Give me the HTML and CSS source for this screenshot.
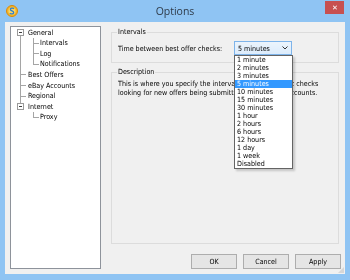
FILE: index.html
```html
<!DOCTYPE html>
<html lang="en">

<head>
    <meta charset="UTF-8">
    <title>Options</title>
    <link rel="stylesheet" href="styles.css">
</head>

<body>

    <div class="window">
        <div class="titlebar">
            <div class="app-icon">
                <svg width="12" height="12" viewBox="0 0 12 12">
                    <circle cx="6" cy="6" r="5.5" fill="#f3b52a" stroke="#d98a0c" stroke-width="1" />
                    <circle cx="6" cy="6" r="3.6" fill="#fbd765" />
                    <path d="M8 3.6 C6.6 2.6 4.2 3 4.4 4.6 C4.6 6 7.8 5.8 7.7 7.6 C7.6 9.2 5 9.3 3.8 8.3"
                        fill="none" stroke="#2f7fd0" stroke-width="1.3" />
                </svg>
            </div>
            <div class="title">Options</div>
            <div class="close">&#x2715;</div>
        </div>

        <div class="content">
            <div class="tree">
                <div class="node r0 first"><span class="toggle"></span><span class="label">General</span></div>
                <div class="node r1"><span class="label">Intervals</span></div>
                <div class="node r1"><span class="label">Log</span></div>
                <div class="node r1 last"><span class="label">Notifications</span></div>
                <div class="node r0 plain"><span class="label">Best Offers</span></div>
                <div class="node r0 plain"><span class="label">eBay Accounts</span></div>
                <div class="node r0 plain"><span class="label">Regional</span></div>
                <div class="node r0 end"><span class="toggle"></span><span class="label">Internet</span></div>
                <div class="node r1 solo"><span class="label">Proxy</span></div>
            </div>

            <div class="panel">
                <div class="group intervals">
                    <span class="group-title">Intervals</span>
                    <div class="field">
                        <span class="field-label">Time between best offer checks:</span>
                        <div class="select">
                            <span>5 minutes</span>
                            <svg class="chevron" width="6" height="4" viewBox="0 0 6 4">
                                <polyline points="0.5,0.5 3,3 5.5,0.5" fill="none" stroke="#333" stroke-width="1" />
                            </svg>
                            <ul class="options">
                                <li>1 minute</li>
                                <li>2 minutes</li>
                                <li>3 minutes</li>
                                <li class="selected">5 minutes</li>
                                <li>10 minutes</li>
                                <li>15 minutes</li>
                                <li>30 minutes</li>
                                <li>1 hour</li>
                                <li>2 hours</li>
                                <li>6 hours</li>
                                <li>12 hours</li>
                                <li>1 day</li>
                                <li>1 week</li>
                                <li>Disabled</li>
                            </ul>
                        </div>
                    </div>
                </div>

                <div class="group description">
                    <span class="group-title">Description</span>
                    <p class="desc-text">This is where you specify the interval between periodic checks looking for new offers being submitted to your eBay accounts.</p>
                </div>

                <div class="btn-list">
                    <button>OK</button>
                    <button>Cancel</button>
                    <button>Apply</button>
                </div>
            </div>
            <div class="grip"></div>
        </div>
    </div>

</body>

</html>
```

FILE: styles.css
```css
* {
    margin: 0;
    padding: 0;
    box-sizing: border-box;
}

body {
    width: 350px;
    height: 280px;
    overflow: hidden;
    background-color: #8fc4f3;
    font-family: 'DejaVu Sans Condensed', 'Liberation Sans', Arial, sans-serif;
    font-size: 7.1px;
    color: #000;
}

.window {
    height: 280px;
    display: flex;
    flex-direction: column;
    will-change: transform;
}

.titlebar {
    height: 22px;
    display: grid;
    grid-template-columns: 1fr auto 1fr;
    align-items: start;
}

.app-icon {
    margin: 5px 0 0 6px;
    height: 12px;
}

.title {
    margin-top: 4px;
    font-family: 'Open Sans', 'Liberation Sans', sans-serif;
    font-size: 10.5px;
    line-height: 14px;
    color: #2e3a48;
}

.close {
    justify-self: end;
    margin: 1px 6px 0 0;
    width: 19px;
    height: 13px;
    background-color: #c75050;
    color: #fff;
    font-family: 'Liberation Sans', sans-serif;
    font-size: 7px;
    line-height: 13px;
    text-align: center;
}

.content {
    position: relative;
    height: 252px;
    margin: 0 5px;
    background-color: #f0f0f0;
    display: flex;
}

/* tree */

.tree {
    margin: 4px 0 0 5px;
    width: 91px;
    height: 243px;
    background-color: #fff;
    border: 1px solid #8e939b;
}

.node {
    height: 11px;
    line-height: 11px;
    padding-left: 17px;
    white-space: nowrap;
    background-repeat: no-repeat;
}

.node .label {
    color: #000;
}

.node:nth-child(2),
.node:nth-child(4),
.node:nth-child(7),
.node:nth-child(9) {
    height: 10px;
    line-height: 10px;
}

.toggle {
    display: inline-block;
    vertical-align: top;
    width: 7px;
    height: 7px;
    margin: 2px 4px 0 -11px;
    border: 1px solid #9a9a9a;
    background-color: #fff;
    position: relative;
}

.toggle::after {
    content: "";
    position: absolute;
    left: 1px;
    top: 2px;
    width: 3px;
    height: 1px;
    background-color: #404040;
}

.r0.plain {
    background-image: linear-gradient(#a5a5a5, #a5a5a5), linear-gradient(#a5a5a5, #a5a5a5);
    background-position: 9px 0, 9px 5px;
    background-size: 1px 100%, 6px 1px;
}

.r0.first {
    background-image: linear-gradient(#a5a5a5, #a5a5a5);
    background-position: 9px 8px;
    background-size: 1px 100%;
}

.r0.end {
    background-image: linear-gradient(#a5a5a5, #a5a5a5);
    background-position: 9px 0;
    background-size: 1px 3px;
}

.r1 {
    padding-left: 29px;
    background-image: linear-gradient(#a5a5a5, #a5a5a5), linear-gradient(#a5a5a5, #a5a5a5), linear-gradient(#a5a5a5, #a5a5a5);
    background-position: 9px 0, 22px 0, 22px 5px;
    background-size: 1px 100%, 1px 100%, 6px 1px;
}

.r1.last {
    background-size: 1px 100%, 1px 6px, 6px 1px;
}

.r1.solo {
    background-image: linear-gradient(#a5a5a5, #a5a5a5), linear-gradient(#a5a5a5, #a5a5a5);
    background-position: 22px 0, 22px 5px;
    background-size: 1px 6px, 6px 1px;
}

/* right side */

.panel {
    margin: 10px 4px 0 10px;
    width: 230px;
    display: flex;
    flex-direction: column;
}

.group {
    margin-right: 2px;
    border: 1px solid #dcdcdc;
    padding: 0 6px;
}

.group-title {
    display: block;
    width: fit-content;
    margin: -6px 0 0 -1px;
    padding: 0 1px;
    line-height: 10px;
    background-color: #f0f0f0;
}

.intervals {
    height: 31px;
}

.field {
    margin-top: 4px;
    display: flex;
    align-items: center;
}

.field-label {
    flex: 1;
}

.select {
    position: relative;
    width: 58px;
    height: 14px;
    margin-right: 40px;
    padding-left: 3px;
    display: flex;
    align-items: center;
    justify-content: space-between;
    border: 1px solid #7eb4ea;
    background: linear-gradient(#ecf4fc, #dcecfc);
}

.chevron {
    margin-right: 3px;
}

.options {
    position: absolute;
    top: 13px;
    left: -1px;
    width: 59px;
    list-style: none;
    background-color: #fff;
    border: 1px solid #646464;
    box-shadow: 2px 2px 2px rgba(0, 0, 0, 0.18);
    z-index: 2;
}

.options li {
    height: 8px;
    line-height: 8px;
    padding-left: 2px;
    white-space: nowrap;
}

.options .selected {
    background-color: #3399ff;
    color: #fff;
}

.description {
    margin-top: 9px;
    height: 172px;
}

.desc-text {
    margin-top: 3px;
    line-height: 8.5px;
    color: #000;
}

.btn-list {
    margin-top: 10px;
    display: flex;
    justify-content: flex-end;
    gap: 6px;
}

.btn-list>button {
    width: 46px;
    height: 15px;
    font-family: 'DejaVu Sans Condensed', 'Liberation Sans', Arial, sans-serif;
    font-size: 7.1px;
    color: #000;
    border: 1px solid #adadad;
    background-color: #e5e5e5;
}

.grip {
    position: absolute;
    right: 1px;
    bottom: 1px;
    width: 6px;
    height: 6px;
    background: radial-gradient(circle, #b9b9b9 0.6px, transparent 0.8px) 0 0 / 2px 2px;
    clip-path: polygon(100% 0, 100% 100%, 0 100%);
}
```
